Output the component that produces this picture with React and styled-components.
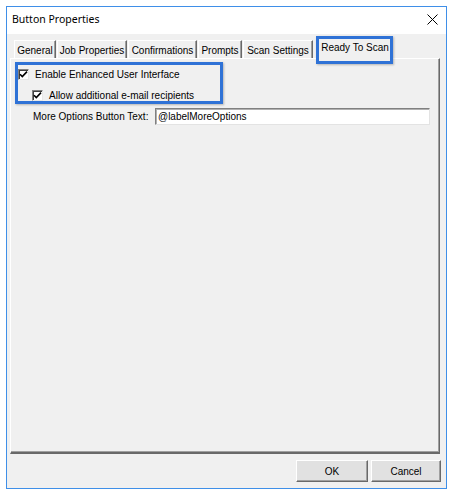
import React from "react";
import styled, { createGlobalStyle } from "styled-components";

const Global = createGlobalStyle`
  html, body { margin: 0; padding: 0; background: #ffffff; }
  body { font-family: "Liberation Sans", Arial, sans-serif; font-size: 10px; color: #000; }
`;

const Window = styled.div`
  position: relative;
  margin: 6px 0 0 6px;
  width: 439px;
  height: 481px;
  border: 1px solid #3f8fe8;
  background: #f0f0f0;
  display: flex;
  flex-direction: column;
`;

const TitleBar = styled.div`
  height: 27px;
  background: #ffffff;
  display: flex;
  align-items: center;
  justify-content: space-between;
  padding: 0 8px 0 5px;
  flex-shrink: 0;
`;

const Title = styled.span`
  font-family: "Noto Sans", "Liberation Sans", sans-serif;
  font-size: 10.5px;
  color: #000;
  margin-top: -3px;
`;

const Close = styled.svg`
  width: 11px;
  height: 11px;
  margin-top: -2px;
`;

const Body = styled.div`
  flex: 1;
  display: flex;
  flex-direction: column;
  padding: 4px 5px 0 3px;
`;

const TabRow = styled.div`
  display: flex;
  align-items: flex-end;
  height: 20px;
  padding-left: 4px;
  position: relative;
  z-index: 1;
`;

const Tab = styled.div`
  width: ${(p) => p.$w}px;
  height: ${(p) => (p.$active ? 21 : 18)}px;
  margin-left: ${(p) => (p.$active ? 4 : 0)}px;
  margin-right: ${(p) => (p.$active ? 0 : 1)}px;
  margin-bottom: ${(p) => (p.$active ? -1 : 0)}px;
  display: flex;
  justify-content: center;
  align-items: ${(p) => (p.$active ? "flex-start" : "center")};
  padding-top: ${(p) => (p.$active ? 3 : 1)}px;
  box-sizing: border-box;
  background: #f0f0f0;
  border-top: 1px solid #ffffff;
  border-left: 1px solid #ffffff;
  border-right: 1px solid #696969;
  box-shadow: inset -1px 0 0 #a0a0a0;
  white-space: nowrap;
  font-size: 10px;
  color: #000;
`;

const Panel = styled.div`
  width: 430px;
  height: 396px;
  box-sizing: border-box;
  border-top: 1px solid #ffffff;
  border-left: 1px solid #ffffff;
  border-right: 1px solid #696969;
  border-bottom: 2px solid #696969;
  box-shadow: inset -1px -1px 0 #a0a0a0;
  padding: 7px 0 0 7px;
  display: flex;
  flex-direction: column;
`;

const CheckRow = styled.label`
  display: flex;
  align-items: center;
  gap: 6px;
  height: 16px;
  margin-left: ${(p) => p.$indent || 0}px;
  margin-bottom: ${(p) => p.$mb || 0}px;
`;

const Box = styled.span`
  width: 11px;
  height: 11px;
  box-sizing: border-box;
  background: #ffffff;
  border-top: 1px solid #808080;
  border-left: 1px solid #808080;
  border-right: 1px solid #e8e8e8;
  border-bottom: 1px solid #e8e8e8;
  box-shadow: inset 1px 1px 0 #404040;
  display: flex;
  align-items: center;
  justify-content: center;
`;

const FieldRow = styled.div`
  display: flex;
  align-items: center;
  margin-top: 5px;
  padding-left: 15px;
`;

const FieldLabel = styled.span`
  width: 122px;
  white-space: nowrap;
  color: #000;
`;

const TextInput = styled.div`
  width: 275px;
  height: 17px;
  box-sizing: border-box;
  background: #ffffff;
  border-top: 1px solid #808080;
  border-left: 1px solid #808080;
  border-right: 1px solid #e3e3e3;
  border-bottom: 1px solid #e3e3e3;
  box-shadow: inset 1px 1px 0 #b0b0b0;
  padding: 1px 0 0 2px;
  font-size: 10px;
  line-height: 14px;
`;

const Footer = styled.div`
  display: flex;
  justify-content: flex-end;
  gap: 3px;
  padding: 6px 0 0 0;
`;

const Button = styled.button`
  width: ${(p) => p.$w}px;
  height: 22px;
  box-sizing: border-box;
  background: #e1e1e1;
  border-top: 1px solid #ffffff;
  border-left: 1px solid #ffffff;
  border-right: 1px solid #696969;
  border-bottom: 1px solid #696969;
  box-shadow: inset -1px -1px 0 #a0a0a0;
  font-family: "Liberation Sans", Arial, sans-serif;
  font-size: 10px;
  color: #000;
  padding: 0;
`;

const Highlight = styled.div`
  position: absolute;
  left: ${(p) => p.$x}px;
  top: ${(p) => p.$y}px;
  width: ${(p) => p.$w}px;
  height: ${(p) => p.$h}px;
  box-sizing: border-box;
  border: 3px solid #2f72d6;
  box-shadow: 1px 1px 2px rgba(0,0,0,0.25);
  pointer-events: none;
  z-index: 5;
`;

const Check = () => (
  <svg width="9" height="9" viewBox="0 0 9 9">
    <path d="M1 4.2 L3.3 6.6 L8 1.6" fill="none" stroke="#000" strokeWidth="1.6" />
  </svg>
);

const tabs = [
  { t: "General", w: 42 },
  { t: "Job Properties", w: 70 },
  { t: "Confirmations", w: 69 },
  { t: "Prompts", w: 44 },
  { t: "Scan Settings", w: 70 },
];

export default function App() {
  return (
    <>
      <Global />
      <Window>
        <TitleBar>
          <Title>Button Properties</Title>
          <Close viewBox="0 0 11 11">
            <path d="M0.5 0.5 L10.5 10.5 M10.5 0.5 L0.5 10.5" stroke="#000" strokeWidth="1" />
          </Close>
        </TitleBar>
        <Body>
          <TabRow>
            {tabs.map((t) => (
              <Tab key={t.t} $w={t.w}>{t.t}</Tab>
            ))}
            <Tab $active $w={74}>Ready To Scan</Tab>
          </TabRow>
          <Panel>
            <CheckRow $mb={5}>
              <Box><Check /></Box>
              Enable Enhanced User Interface
            </CheckRow>
            <CheckRow $indent={14}>
              <Box><Check /></Box>
              Allow additional e-mail recipients
            </CheckRow>
            <FieldRow>
              <FieldLabel>More Options Button Text:</FieldLabel>
              <TextInput>@labelMoreOptions</TextInput>
            </FieldRow>
          </Panel>
          <Footer>
            <Button $w={72}>OK</Button>
            <Button $w={70}>Cancel</Button>
          </Footer>
        </Body>
        <Highlight $x={309} $y={29} $w={77} $h={28} />
        <Highlight $x={8} $y={55} $w={208} $h={42} />
      </Window>
    </>
  );
}
